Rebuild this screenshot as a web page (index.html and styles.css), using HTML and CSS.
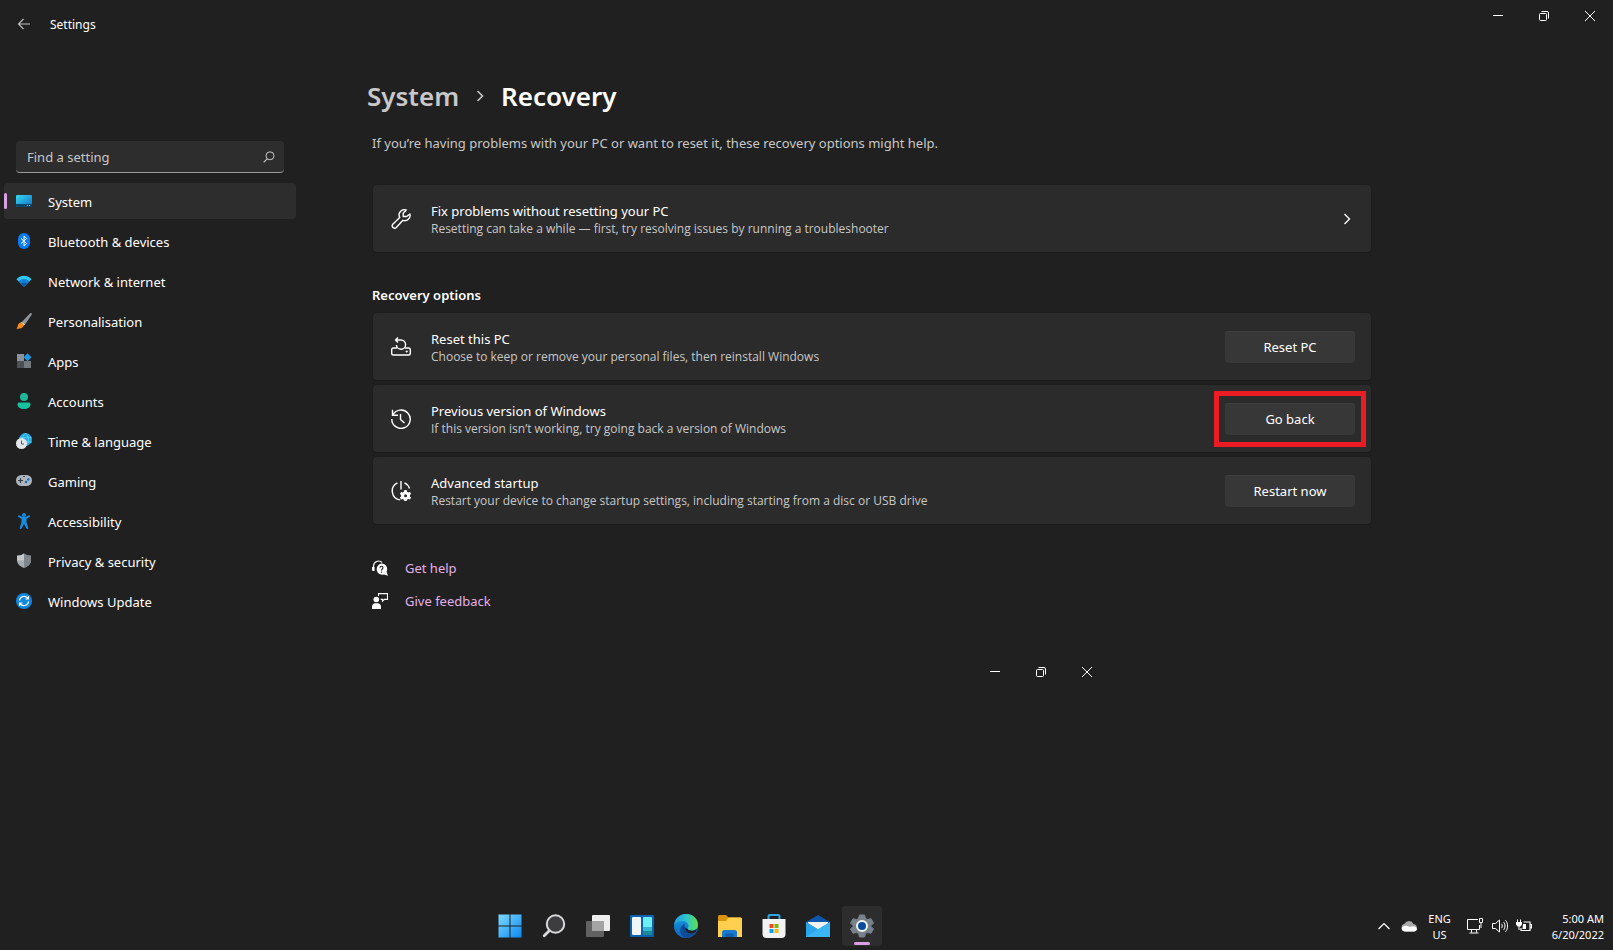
FILE: index.html
```html
<!DOCTYPE html>
<html lang="en-GB">
<head>
    <meta charset="UTF-8">
    <meta name="viewport" content="width=device-width, initial-scale=1.0">
    <title>Settings</title>
    <link rel="stylesheet" href="styles.css">
</head>
<body>
    <header class="titlebar">
        <button class="back" type="button" aria-label="Back">
            <svg width="14" height="12" viewBox="0 0 14 12"><path d="M6.5 1 1.5 6l5 5M1.5 6H13" fill="none" stroke="#c4c4c4" stroke-width="1.1"/></svg>
        </button>
        <span class="app-name">Settings</span>
        <div class="window-controls">
            <button type="button" aria-label="Minimise"><svg width="10" height="10" viewBox="0 0 10 10"><path d="M0 4.5h10"/></svg></button>
            <button type="button" aria-label="Restore"><svg width="10" height="10" viewBox="0 0 10 10"><rect x=".5" y="2.5" width="7" height="7" rx="1"/><path d="M2.5.5H8A1.5 1.5 0 0 1 9.500 2v5.500"/></svg></button>
            <button type="button" aria-label="Close"><svg width="10" height="10" viewBox="0 0 10 10"><path d="m0 0 10 10M10 0 0 10"/></svg></button>
        </div>
    </header>

    <div class="layout">
        <aside class="sidebar">
            <label class="search">
                <input type="text" placeholder="Find a setting" aria-label="Find a setting">
                <svg width="12" height="12" viewBox="0 0 12 12"><circle cx="7" cy="4.800" r="4" fill="none" stroke="#c8c8c8"/><path d="M4.200 7.800.6 11.400" stroke="#c8c8c8" stroke-width="1.200"/></svg>
            </label>
            <nav class="menu">
                <a class="active" href="#system">
                    <svg width="16" height="16" viewBox="0 0 16 16">
                        <defs><linearGradient id="sys" x1="0" y1="0" x2="1" y2="1"><stop offset="0" stop-color="#35d6f0"/><stop offset="1" stop-color="#1273c8"/></linearGradient></defs>
                        <rect y="2" width="16" height="12" rx="1" fill="url(#sys)"/>
                        <path d="M0 11h16v2a1 1 0 0 1-1 1H1a1 1 0 0 1-1-1z" fill="#0b4668"/>
                        <path d="M11 12h1v1h-1zM13 12h1v1h-1z" fill="#7cc8e8"/>
                    </svg><span>System</span></a>
                <a href="#bluetooth">
                    <svg width="16" height="16" viewBox="0 0 16 16">
                        <rect x="2" width="12" height="16" rx="6" fill="#0a7cf0"/>
                        <path d="m5 5.500 5.500 5L8 13V3l2.500 2.500-5.500 5" fill="none" stroke="#fff"/>
                    </svg><span>Bluetooth &amp; devices</span></a>
                <a href="#network">
                    <svg width="16" height="16" viewBox="0 0 16 16">
                        <path d="M.4 6.200C4.500 1.600 11.500 1.600 15.600 6.200L8 13.800z" fill="#2fc8f2"/>
                        <path d="M2.700 8.300C5.500 5.300 10.500 5.300 13.300 8.300L8 13.800z" fill="#1583d8"/>
                        <path d="M5 10.600C6.600 9 9.400 9 11 10.600L8 13.800z" fill="#0c58b0"/>
                    </svg><span>Network &amp; internet</span></a>
                <a href="#personalisation">
                    <svg width="16" height="16" viewBox="0 0 16 16">
                        <path d="M15.500.2c.6.500.4 1.200 0 1.800L9 11.500 6 8.800 13.500.9c.6-.6 1.400-1.100 2-.7z" fill="#8f979e"/>
                        <path d="m6 8.800 3 2.700-1.300 1.200-2.900-2.600z" fill="#dfe3e6"/>
                        <path d="M4.800 9.600c1.600.2 2.700 1.300 2.700 2.700 0 2.300-2.700 3.700-7.200 3.400 2-1.300 1-5.600 4.500-6.100z" fill="#f58a1f"/>
                    </svg><span>Personalisation</span></a>
                <a href="#apps">
                    <svg width="16" height="16" viewBox="0 0 16 16">
                        <path d="M1 1h7v7H1z" fill="#8b9299"/><path d="M1 8h7v7H1z" fill="#4c5157"/><path d="M8 8h7v7H8z" fill="#73797f"/>
                        <path d="m11.500.2 4 4-4 4-4-4z" fill="#2196e3"/>
                    </svg><span>Apps</span></a>
                <a href="#accounts">
                    <svg width="16" height="16" viewBox="0 0 16 16">
                        <circle cx="8" cy="4" r="4" fill="#1fb89b"/>
                        <path d="M3 9.500h10a1.500 1.500 0 0 1 1.500 1.500c0 3.200-2.700 5-6.500 5s-6.500-1.800-6.500-5A1.500 1.500 0 0 1 3 9.500z" fill="#17c2a0"/>
                    </svg><span>Accounts</span></a>
                <a href="#time">
                    <svg width="16" height="16" viewBox="0 0 16 16">
                        <circle cx="9.500" cy="6.500" r="6.500" fill="#2ba8e2"/>
                        <path d="M3.500 4.500h12M4 9h12M9.500 0c-4 4-4 9 0 13 4-4 4-9 0-13" fill="none" stroke="#57d6f2" stroke-width=".8"/>
                        <circle cx="5.500" cy="10.500" r="5.500" fill="#e3e5e8"/>
                        <path d="M5.500 7.500V11H8" fill="none" stroke="#555b61"/>
                    </svg><span>Time &amp; language</span></a>
                <a href="#gaming">
                    <svg width="16" height="16" viewBox="0 0 16 16">
                        <rect y="2" width="16" height="11" rx="5.500" fill="#aeb5bc"/>
                        <path d="M4.500 5v5M2 7.500h5" stroke="#3a3f44" stroke-width="1.200"/>
                        <circle cx="10" cy="9" r="1.200" fill="#0f6cbd"/><circle cx="12.300" cy="6.500" r="1.200" fill="#0f6cbd"/><path d="M7 3.500h2" stroke="#3a3f44"/>
                    </svg><span>Gaming</span></a>
                <a href="#accessibility">
                    <svg width="16" height="16" viewBox="0 0 16 16">
                        <circle cx="8" cy="2" r="2" fill="#168ce0"/>
                        <path d="M2.300 2.600c.5-.5 1-.3 1.500 0 2.800 2 5.600 2 8.400 0 .5-.3 1-.5 1.500 0s.3 1.100-.2 1.500L10.500 6v3.300l1.700 5.200c.2.700 0 1.200-.6 1.400s-1.100 0-1.400-.7L8 10.800l-2.200 4.400c-.3.700-.8.900-1.400.7s-.8-.7-.6-1.400l1.700-5.200V6l-3-1.900c-.5-.4-.7-1-.2-1.500z" fill="#168ce0"/>
                    </svg><span>Accessibility</span></a>
                <a href="#privacy">
                    <svg width="16" height="16" viewBox="0 0 16 16">
                        <path d="M8 .5c2 1.500 4.300 2.200 7 2.200V7c0 3.800-2.600 6.300-7 8-4.400-1.700-7-4.200-7-8V2.700C3.700 2.700 6 2 8 .5z" fill="#a4abb1"/>
                        <path d="M8 .5c2 1.500 4.300 2.200 7 2.200V7c0 3.800-2.600 6.300-7 8z" fill="#7f868c"/>
                        <path d="M8 .5v7H1V2.700C3.700 2.700 6 2 8 .5z" fill="#c3c8cc"/>
                    </svg><span>Privacy &amp; security</span></a>
                <a href="#update">
                    <svg width="16" height="16" viewBox="0 0 16 16">
                        <circle cx="8" cy="8" r="8" fill="#1187dd"/>
                        <path d="M3.500 7.500A4.600 4.600 0 0 1 12 5.600M12.500 8.500A4.600 4.600 0 0 1 4 10.400M12.400 3v3H9.500M3.600 13v-3h2.900" fill="none" stroke="#fff" stroke-width="1.200"/>
                    </svg><span>Windows Update</span></a>
            </nav>
        </aside>

        <main class="content">
            <h1 class="breadcrumb">
                <a href="#system">System</a>
                <svg width="8" height="12" viewBox="0 0 8 12"><path d="m1.500 1 5 5-5 5" fill="none" stroke="#c8c8c8" stroke-width="1.600"/></svg>
                <span>Recovery</span>
            </h1>
            <p class="intro">If you’re having problems with your PC or want to reset it, these recovery options might help.</p>

            <a class="card card-link" href="#troubleshoot">
                <svg width="20" height="20" viewBox="0 0 20 20"><path d="M18.900 5a5.300 5.300 0 0 1-7 6.300l-6.600 7.100a2.300 2.300 0 0 1-3.500-3.200l6.900-6.800A5.300 5.300 0 0 1 15.200 1l-3 3.200v3.300h3.400z" fill="none" stroke="#fff" stroke-width="1.400" stroke-linejoin="round"/></svg>
                <div class="card-text">
                    <h3>Fix problems without resetting your PC</h3>
                    <p>Resetting can take a while — first, try resolving issues by running a troubleshooter</p>
                </div>
                <svg class="chevron" width="8" height="12" viewBox="0 0 8 12"><path d="m1.500 1 5 5-5 5" fill="none" stroke="#fff" stroke-width="1.300"/></svg>
            </a>

            <h2>Recovery options</h2>
            <section class="card">
                <svg width="20" height="20" viewBox="0 0 20 20"><g fill="none" stroke="#fff" stroke-width="1.400" stroke-linejoin="round"><path d="M6 11H2.500A1.800 1.800 0 0 0 .7 12.800v3.400A1.800 1.800 0 0 0 2.500 18h15a1.800 1.800 0 0 0 1.800-1.800v-3.400a1.800 1.800 0 0 0-1.800-1.800H14"/><path d="M7 .5 4.500 3 7 5.500M4.700 3H10a4.600 4.600 0 1 1-4.600 5"/></g><circle cx="15.700" cy="14.500" r="1.100" fill="#fff"/></svg>
                <div class="card-text">
                    <h3>Reset this PC</h3>
                    <p>Choose to keep or remove your personal files, then reinstall Windows</p>
                </div>
                <button class="btn" type="button">Reset PC</button>
            </section>
            <section class="card">
                <svg width="20" height="20" viewBox="0 0 20 20"><path d="M1.700 6.200A9.200 9.200 0 1 1 .8 10M1.500.800v5.500H7M9.500 5v5.500l4 3.500" fill="none" stroke="#fff" stroke-width="1.400"/></svg>
                <div class="card-text">
                    <h3>Previous version of Windows</h3>
                    <p>If this version isn’t working, try going back a version of Windows</p>
                </div>
                <button class="btn marked" type="button">Go back</button>
            </section>
            <section class="card">
                <svg width="20" height="20" viewBox="0 0 20 20">
                    <path d="M10 0v8.500M6.500 1.800a9 9 0 0 0 2.700 17.100M13.500 1.800A9 9 0 0 1 18.500 7.500" fill="none" stroke="#fff" stroke-width="1.400"/>
                    <path d="M13.400 9h2.200l.5 1.700 1.200.7 1.700-.4 1.100 1.900-1.200 1.200v1.300l1.200 1.200-1.100 1.900-1.700-.4-1.200.7-.5 1.200h-2.200l-.5-1.200-1.200-.7-1.700.4-1.100-1.900 1.200-1.200v-1.300l-1.200-1.200L10 11l1.700.4 1.200-.7z" fill="#fff"/><circle cx="14.500" cy="14.700" r="1.500" fill="#2b2b2b"/>
                </svg>
                <div class="card-text">
                    <h3>Advanced startup</h3>
                    <p>Restart your device to change startup settings, including starting from a disc or USB drive</p>
                </div>
                <button class="btn" type="button">Restart now</button>
            </section>

            <div class="help-links">
                <a href="#help">
                    <svg width="16" height="16" viewBox="0 0 16 16"><path d="M1.500 11V6a5 5 0 0 1 8.500-3.500" fill="none" stroke="#fff" stroke-width="1.200"/><path d="M0 7h2.500v4H1.200A1.200 1.200 0 0 1 0 9.800z" fill="#fff"/><path d="M9.500 3.500a5.700 5.700 0 0 1 5.100 8.200l1.400 4-4-1.100a5.700 5.700 0 1 1-2.500-11.100z" fill="#fff"/><path d="M8 7.800c0-2 3-2 3 0 0 1.200-1.500 1.200-1.500 2.700M9.500 11.500v1.200" fill="none" stroke="#202020" stroke-width="1.100"/></svg>
                    Get help</a>
                <a href="#feedback">
                    <svg width="16" height="16" viewBox="0 0 16 16"><path d="M6.500 3V.6h9v5.800h-3.200L10.500 8.200V6.400H8.700" fill="none" stroke="#fff" stroke-width="1.100"/><circle cx="4.300" cy="6.500" r="2.800" fill="#fff"/><path d="M0 16v-2.300C0 11.500 1.500 10.300 3 10.300h2.800c1.700 0 3.200 1.200 3.200 3.400V16z" fill="#fff"/></svg>
                    Give feedback</a>
            </div>

            <div class="window-controls inner-controls">
                <button type="button" aria-label="Minimise"><svg width="10" height="10" viewBox="0 0 10 10"><path d="M0 4.500h10"/></svg></button>
                <button type="button" aria-label="Restore"><svg width="10" height="10" viewBox="0 0 10 10"><rect x=".5" y="2.500" width="7" height="7" rx="1"/><path d="M2.500.5H8A1.500 1.500 0 0 1 9.500 2v5.500"/></svg></button>
                <button type="button" aria-label="Close"><svg width="10" height="10" viewBox="0 0 10 10"><path d="m0 0 10 10M10 0 0 10"/></svg></button>
            </div>
        </main>
    </div>

    <footer class="taskbar">
        <div class="apps">
            <button type="button" aria-label="Start">
                <svg width="24" height="24" viewBox="0 0 24 24"><defs><linearGradient id="win" gradientUnits="userSpaceOnUse" x1="0" y1="0" x2="24" y2="24"><stop offset="0" stop-color="#7fdcff"/><stop offset="1" stop-color="#0a85f0"/></linearGradient></defs><path d="M.5.5h11v11H.5zM12.500.5h11v11h-11zM.5 12.500h11v11H.5zM12.500 12.500h11v11h-11z" fill="url(#win)"/></svg>
            </button>
            <button type="button" aria-label="Search">
                <svg width="24" height="24" viewBox="0 0 24 24"><path d="m7.500 16.500-5.300 5.300" stroke="#d8dadd" stroke-width="2.800" stroke-linecap="round"/><circle cx="13.500" cy="10" r="8.700" fill="#3d3d3f" stroke="#d8dadd" stroke-width="2"/></svg>
            </button>
            <button type="button" aria-label="Task view">
                <svg width="24" height="24" viewBox="0 0 24 24"><rect x="6" y="1" width="18" height="16" rx="1" fill="#eee"/><rect y="7" width="18" height="16" rx="1" fill="#626262"/><path d="M6 7h12v10H6z" fill="#a4a4a4"/></svg>
            </button>
            <button type="button" aria-label="Widgets">
                <svg width="24" height="24" viewBox="0 0 24 24"><rect y="1" width="24" height="22" rx="1" fill="#0b63b0"/><rect x="2" y="3" width="9" height="18" rx="1" fill="#f2f5f8"/><rect x="13" y="3" width="9" height="18" rx="1" fill="#1a8a9a"/><path d="M13 4a1 1 0 0 1 1-1h7a1 1 0 0 1 1 1v9h-9z" fill="#6df0f5"/><path d="M13 13h9v4h-9z" fill="#35b8cc"/></svg>
            </button>
            <button type="button" aria-label="Edge">
                <svg width="24" height="24" viewBox="0 0 24 24">
                    <defs>
                        <linearGradient id="edge" x1="0" y1="0" x2="1" y2="0"><stop offset="0" stop-color="#1f9be0"/><stop offset=".5" stop-color="#2cc4cf"/><stop offset="1" stop-color="#62dd4e"/></linearGradient>
                        <linearGradient id="edge-low" x1="0" y1="0" x2="0" y2="1"><stop offset="0" stop-color="#1b9de2"/><stop offset="1" stop-color="#0b66bd"/></linearGradient>
                    </defs>
                    <circle cx="12" cy="12" r="12" fill="url(#edge-low)"/>
                    <path d="M0 11C1 4.500 6 0 12 0c7 0 12 5 12 10.500 0 4-3 6.300-6.300 6.300-2.700 0-4.200-1-4.200-2 0-.7 1-1 1-2.800C14.500 9 11.500 7 8.300 7 4.500 7 1.500 8.700 0 11z" fill="url(#edge)"/>
                    <path d="M13.500 14.800c0 1 1.500 2 4.200 2 2 0 3.700-.6 4.700-1.500.3.300.2.800 0 1.200A12 12 0 0 1 12.500 24c-5-1-7-5-6-9 .6-2.600 2.500-4.500 4.800-5.400-1.600 1.900-.6 5.200 2.200 5.200z" fill="#0e4c98"/>
                    <path d="M13.500 14.800c0 1 1.500 2 4.200 2 2 0 3.700-.6 5-1.800l-1 3c-5 3-11 1-10.500-5 .3 1.200 1.200 1.800 2.300 1.800z" fill="#202020"/>
                </svg>
            </button>
            <button type="button" aria-label="File Explorer">
                <svg width="24" height="24" viewBox="0 0 24 24"><path d="M0 2.500A1.500 1.500 0 0 1 1.500 1H8l2.500 2.500H22.500A1.500 1.500 0 0 1 24 5v6H0z" fill="#d9930e"/><path d="M0 7h8l2.500-3.500h12A1.500 1.500 0 0 1 24 5v18H0z" fill="#ffcf4d"/><path d="M4 23v-4.500A2.500 2.500 0 0 1 6.500 16h10a2.500 2.500 0 0 1 2.500 2.500V23z" fill="#1879cf"/><path d="M7.500 19.500h8V23h-8z" fill="#105fae"/></svg>
            </button>
            <button type="button" aria-label="Microsoft Store">
                <svg width="24" height="24" viewBox="0 0 24 24"><path d="M6.500 6V2.500A1.500 1.500 0 0 1 8 1h8a1.500 1.500 0 0 1 1.500 1.500V6" fill="none" stroke="#2fa6e6" stroke-width="2"/><path d="M.5 5h23v15a4 4 0 0 1-4 4h-15a4 4 0 0 1-4-4z" fill="#f2f2f2"/><path d="M7.500 10h4v4h-4z" fill="#f04a23"/><path d="M12.500 10h4v4h-4z" fill="#7db904"/><path d="M7.500 15h4v4h-4z" fill="#06a3ee"/><path d="M12.500 15h4v4h-4z" fill="#fdb70a"/></svg>
            </button>
            <button type="button" aria-label="Mail">
                <svg width="24" height="24" viewBox="0 0 24 24"><path d="M0 8 12 1l12 7v5H0z" fill="#0d57a8"/><path d="M2 8h20v10H2z" fill="#f2f2f2"/><path d="M0 8 24 23H1a1 1 0 0 1-1-1z" fill="#2aa4ea"/><path d="M24 8 10 16.500 24 23z" fill="#43c2f7"/><path d="M24 8 0 22.500V23h24z" fill="#39b5f3"/><path d="m0 8 12 7.300L1 22z" fill="#2aa4ea"/></svg>
            </button>
            <button class="running" type="button" aria-label="Settings">
                <svg width="24" height="24" viewBox="0 0 24 24"><path d="m9.500 1 5 0 1 3.500 2 1.100 3.400-.9 2.600 4.300-2.500 2.500v1l2.500 2.500-2.600 4.300-3.400-.9-2 1.100-1 3.500h-5l-1-3.500-2-1.100-3.400.9L.5 15 3 12.500v-1L.5 9l2.600-4.300 3.400.9 2-1.100z" fill="#78828c" stroke="#78828c" stroke-linejoin="round"/><circle cx="12" cy="12" r="5" fill="#0a4c9c" stroke="#f4f6f8" stroke-width="2"/></svg>
            </button>
        </div>
        <div class="tray">
            <svg width="12" height="8" viewBox="0 0 12 8"><path d="m.5 7 5.500-5.500L11.500 7" fill="none" stroke="#fff" stroke-width="1.200"/></svg>
            <svg width="16" height="12" viewBox="0 0 16 12"><path d="M4 11.500a4 4 0 0 1-.5-7.800A5 5 0 0 1 12.500 4c4.500.5 4.500 7 .5 7.500z" fill="#a9a9a9"/><path d="M4 11.500C.500 11.500-.500 7.500 2.500 6.300 5 5.300 7 6 8.500 7 11 5.500 15 6 15.800 8.300c.5 2-1 3.200-2.800 3.200z" fill="#fff"/></svg>
            <span class="lang">ENG<br>US</span>
            <div class="status">
                <svg width="17" height="16" viewBox="0 0 17 16"><path d="M11 1.500H.5v10h12V7M4.500 11.500v3M9.500 11.500v3M2.500 15h9M12.500.5h3v4h-3zM14 5v5" fill="none" stroke="#fff"/></svg>
                <svg width="16" height="14" viewBox="0 0 16 14"><path d="M.5 4.500h3L7.500 1v12l-4-3.500h-3zM9.500 4.800c1 1.200 1 3.200 0 4.400M11.500 3c2 2.200 2 5.800 0 8M13.400 1.200c2.900 3 2.900 8.600 0 11.600" fill="none" stroke="#fff"/></svg>
                <svg width="16" height="14" viewBox="0 0 16 14"><path d="M7.500 3h6.500v8.500H5V9M14.500 5.500h1v3.500h-1" fill="none" stroke="#fff" stroke-width="1.200"/><path d="M7 5h3v5H6.500zM0 3h6v2.500l-1.500 2H1.500L0 5.500zM1 .5h1V3H1zM4 .5h1V3H4zM2.500 7h1v4h-1z" fill="#fff"/></svg>
            </div>
            <time class="clock">5:00 AM<br>6/20/2022</time>
        </div>
    </footer>
</body>
</html>
```
FILE: styles.css
```css
* {
    box-sizing: border-box;
}

body {
    margin: 0;
    min-height: 100vh;
    display: flex;
    flex-direction: column;
    background-color: #202020;
    color: #fff;
    font-family: "Segoe UI", "Noto Sans", sans-serif;
    font-size: 13px;
    line-height: 20px;
}

h1, h2, h3, p {
    margin: 0;
}

a {
    color: inherit;
    text-decoration: none;
}

button {
    border: 0;
    padding: 0;
    background: none;
    color: inherit;
    font: inherit;
}

svg {
    display: block;
    flex-shrink: 0;
}

/* title bar */
.titlebar {
    display: flex;
    align-items: center;
    height: 48px;
    padding-left: 17px;
}

.app-name {
    margin-left: 19px;
    padding-top: 2px;
    font-size: 12px;
}

.window-controls {
    display: flex;
}

.titlebar .window-controls {
    align-self: flex-start;
    margin-left: auto;
}

.window-controls button {
    display: grid;
    place-items: center;
    width: 46px;
    height: 32px;
}

.window-controls svg {
    fill: none;
    stroke: #fff;
}

.layout {
    flex: 1;
    display: flex;
}

/* sidebar */
.sidebar {
    width: 300px;
    flex-shrink: 0;
    padding: 93px 4px 0;
}

.search {
    display: flex;
    align-items: center;
    height: 32px;
    margin: 0 12px 10px;
    padding: 0 9px 0 11px;
    background-color: #2d2d2d;
    border-bottom: 1px solid #9a9a9a;
    border-radius: 4px;
}

.search input {
    flex: 1;
    min-width: 0;
    border: 0;
    padding: 0;
    outline: none;
    background: none;
    color: #fff;
    font: inherit;
}

.search input::placeholder {
    color: #c8c8c8;
    opacity: 1;
}

.menu {
    display: flex;
    flex-direction: column;
    gap: 4px;
}

.menu a {
    display: flex;
    align-items: center;
    gap: 16px;
    height: 36px;
    padding-left: 12px;
    border-radius: 4px;
}

.menu span {
    padding-top: 2px;
}

.menu .active {
    padding-left: 0;
    background-color: #2d2d2d;
}

.menu .active::before {
    content: "";
    width: 3px;
    height: 16px;
    margin-right: -7px;
    border-radius: 2px;
    background-color: #dd9fe3;
}

/* main column */
.content {
    flex: 1;
    max-width: 1071px;
    padding: 28px 0 0 73px;
}

.breadcrumb {
    display: flex;
    align-items: center;
    gap: 17px;
    margin-left: -6px;
    font-size: 26px;
    font-weight: 600;
    line-height: 40px;
}

.breadcrumb a {
    color: #c8c8c8;
}

.intro {
    margin: 17px 0 32px -1px;
    color: #c8c8c8;
}

h2 {
    margin: 33px 0 8px -1px;
    font-size: 13px;
    font-weight: 600;
    line-height: 20px;
}

.card {
    display: flex;
    align-items: center;
    gap: 20px;
    min-height: 67px;
    margin-bottom: 5px;
    padding: 0 16px 0 18px;
    background-color: #2b2b2b;
    border-radius: 4px;
    box-shadow: 0 0 0 1px #1d1d1d;
}

.card-link {
    padding-right: 20px;
}

.card-text {
    flex: 1;
}

.card h3 {
    font-size: 13px;
    font-weight: 400;
    line-height: 20px;
}

.card p {
    color: #c8c8c8;
    font-family: "Segoe UI", "Open Sans", sans-serif;
    font-size: 12px;
    line-height: 16px;
}

.btn {
    position: relative;
    width: 130px;
    height: 32px;
    background-color: #373737;
    border-radius: 4px;
    box-shadow: inset 0 1px #3e3e3e;
}

.marked::after {
    content: "";
    position: absolute;
    inset: -12px -11px;
    border: 5px solid #ed1c24;
}

.help-links {
    display: flex;
    flex-direction: column;
    gap: 13px;
    margin: 34px 0 0 -1px;
    color: #e3b1ea;
}

.help-links a {
    display: flex;
    align-items: center;
    gap: 17px;
}

.inner-controls {
    margin-top: 45px;
    padding-left: 60%;
}

/* taskbar */
.taskbar {
    display: flex;
    align-items: center;
    height: 48px;
    padding-right: 9px;
}

.apps {
    display: flex;
    gap: 4px;
    margin: 0 auto;
}

.apps button {
    display: grid;
    place-items: center;
    width: 40px;
    height: 40px;
    border-radius: 4px;
}

.apps .running {
    position: relative;
    background-color: #2d2d2d;
}

.running::after {
    content: "";
    position: absolute;
    bottom: 1px;
    left: 12px;
    width: 16px;
    height: 3px;
    border-radius: 2px;
    background-color: #dd9fe3;
}

.tray {
    display: flex;
    align-items: center;
    gap: 11px;
    padding-left: 6px;
    font-size: 11px;
    line-height: 16px;
}

.lang,
.clock {
    padding-top: 2px;
}

.lang {
    text-align: center;
}

.status {
    display: flex;
    align-items: center;
    gap: 8px;
    margin: 0 9px 0 5px;
}

.clock {
    text-align: right;
}
```
